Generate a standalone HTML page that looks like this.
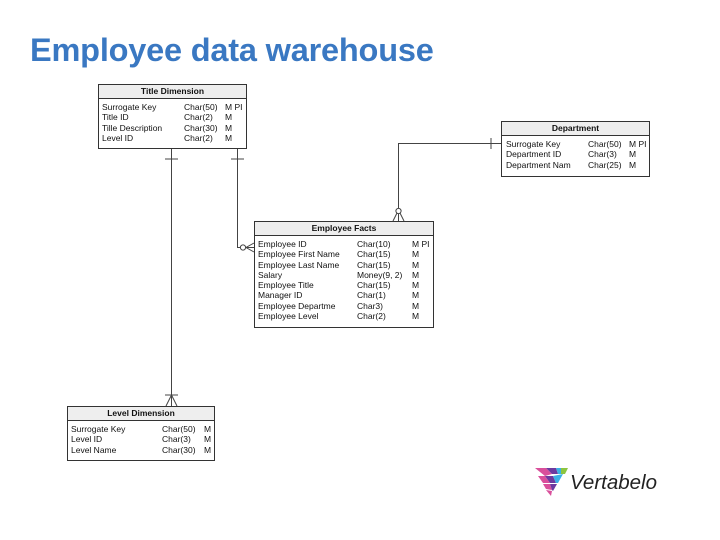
<!DOCTYPE html>
<html><head><meta charset="utf-8"><style>
body{margin:0;width:720px;height:540px;background:#fff;position:relative;overflow:hidden;font-family:"Liberation Sans",Arial,sans-serif}
h1{position:absolute;left:30px;top:32px;margin:0;font-size:32.5px;font-weight:bold;color:#3a78c2;letter-spacing:-0.2px}
.t{position:absolute;border:1px solid #333;background:#fff;font-size:8.5px;color:#111}
.t .h{background:#eee;border-bottom:1px solid #333;text-align:center;font-weight:bold;height:13px;line-height:13px}
.t .r{position:relative;height:10.3px;line-height:10.3px;white-space:nowrap}
.t .r span{position:absolute;top:0}
svg{position:absolute;left:0;top:0}
</style></head><body>
<h1>Employee data warehouse</h1>
<svg width="720" height="540" stroke="#444" stroke-width="1" fill="none">
<path d="M171.5 148V406M165 159H178M166 406L171.5 395L177 406M165 395H178"/>
<path d="M237.5 148V247.5H254M231 159H244M254 243L246 247.5L254 252"/>
<circle cx="243" cy="247.5" r="2.6" fill="#fff"/>
<path d="M501 143.5H398.5V221M491 138V149M393 221L398.5 210L404 221"/>
<circle cx="398.5" cy="211" r="2.6" fill="#fff"/>
</svg>
<div class="t" style="left:98px;top:84px;width:147px;height:63px">
<div class="h">Title Dimension</div>
<div style="height:3px"></div>
<div class="r"><span style="left:3px">Surrogate Key</span><span style="left:85px">Char(50)</span><span style="left:126px">M PI</span></div>
<div class="r"><span style="left:3px">Title ID</span><span style="left:85px">Char(2)</span><span style="left:126px">M</span></div>
<div class="r"><span style="left:3px">Tille Description</span><span style="left:85px">Char(30)</span><span style="left:126px">M</span></div>
<div class="r"><span style="left:3px">Level ID</span><span style="left:85px">Char(2)</span><span style="left:126px">M</span></div>
</div>
<div class="t" style="left:501px;top:121px;width:147px;height:54px">
<div class="h">Department</div>
<div style="height:3px"></div>
<div class="r"><span style="left:4px">Surrogate Key</span><span style="left:86px">Char(50)</span><span style="left:127px">M PI</span></div>
<div class="r"><span style="left:4px">Department ID</span><span style="left:86px">Char(3)</span><span style="left:127px">M</span></div>
<div class="r"><span style="left:4px">Department Nam</span><span style="left:86px">Char(25)</span><span style="left:127px">M</span></div>
</div>
<div class="t" style="left:254px;top:221px;width:178px;height:105px">
<div class="h">Employee Facts</div>
<div style="height:3px"></div>
<div class="r"><span style="left:3px">Employee ID</span><span style="left:102px">Char(10)</span><span style="left:157px">M PI</span></div>
<div class="r"><span style="left:3px">Employee First Name</span><span style="left:102px">Char(15)</span><span style="left:157px">M</span></div>
<div class="r"><span style="left:3px">Employee Last Name</span><span style="left:102px">Char(15)</span><span style="left:157px">M</span></div>
<div class="r"><span style="left:3px">Salary</span><span style="left:102px">Money(9, 2)</span><span style="left:157px">M</span></div>
<div class="r"><span style="left:3px">Employee Title</span><span style="left:102px">Char(15)</span><span style="left:157px">M</span></div>
<div class="r"><span style="left:3px">Manager ID</span><span style="left:102px">Char(1)</span><span style="left:157px">M</span></div>
<div class="r"><span style="left:3px">Employee Departme</span><span style="left:102px">Char3)</span><span style="left:157px">M</span></div>
<div class="r"><span style="left:3px">Employee Level</span><span style="left:102px">Char(2)</span><span style="left:157px">M</span></div>
</div>
<div class="t" style="left:67px;top:406px;width:146px;height:53px">
<div class="h">Level Dimension</div>
<div style="height:3px"></div>
<div class="r"><span style="left:3px">Surrogate Key</span><span style="left:94px">Char(50)</span><span style="left:136px">M</span></div>
<div class="r"><span style="left:3px">Level ID</span><span style="left:94px">Char(3)</span><span style="left:136px">M</span></div>
<div class="r"><span style="left:3px">Level Name</span><span style="left:94px">Char(30)</span><span style="left:136px">M</span></div>
</div>
<svg width="720" height="540" style="left:0;top:0" stroke="none">
<polygon points="535,468 546,468 552,474 545,476" fill="#d94f9b"/>
<polygon points="546,468 556,468 558,474 552,474" fill="#6c3aa0"/>
<polygon points="556,468 561,468 561,474 558,474" fill="#3bb1e6"/>
<polygon points="561,468 568,468 565,474 561,474" fill="#8cc540"/>
<polygon points="538,476 545,476 550,483 543,483" fill="#d94f9b"/>
<polygon points="545,476 553,476 556,483 550,483" fill="#6c3aa0"/>
<polygon points="553,476 563,474 558,483 556,483" fill="#3bb1e6"/>
<polygon points="543,484 550,484 552,490 546,489" fill="#d94f9b"/>
<polygon points="550,484 557,484 553,491 552,490" fill="#6c3aa0"/>
<polygon points="546,490 552,491 551,496" fill="#d94f9b"/>
</svg>
<div style="position:absolute;left:570px;top:470px;font-size:20.5px;font-style:italic;color:#222;line-height:26px">Vertabelo</div>
</body></html>
